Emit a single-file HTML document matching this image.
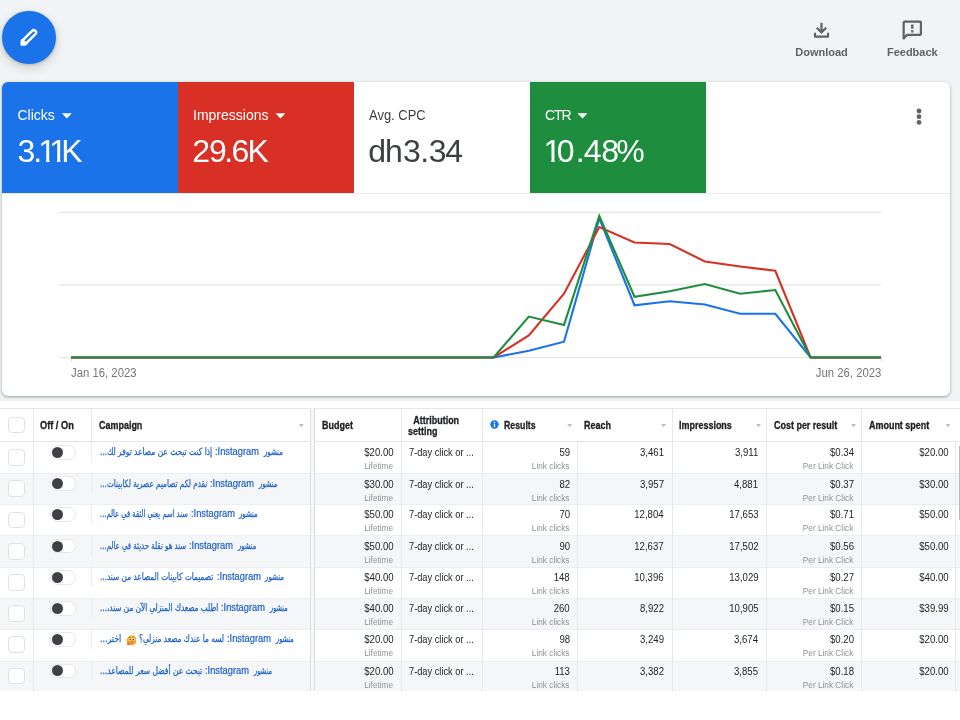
<!DOCTYPE html>
<html lang="en">
<head>
<meta charset="utf-8">
<title>Campaign performance</title>
<style>
*{box-sizing:border-box;margin:0;padding:0}
html,body{width:960px;height:720px;overflow:hidden;background:#fff}
body{font-family:"Liberation Sans","DejaVu Sans",sans-serif;color:#1c1e21}
#page{position:relative;width:960px;height:720px;overflow:hidden;background:#fff;will-change:transform}
#topbg{position:absolute;left:0;top:0;width:960px;height:401px;background:#f1f3f4}
#fab{position:absolute;left:2.4px;top:10.5px;width:53.5px;height:53.3px;border-radius:50%;background:#1a73e8;box-shadow:0 1px 3px rgba(60,64,67,.28),0 4px 8px 2px rgba(60,64,67,.13)}
#fab svg{position:absolute;left:0;top:0}
.act{position:absolute;top:0;text-align:center;color:#5f6368;font-size:11px;font-weight:bold;letter-spacing:0;white-space:nowrap}
.act svg{position:absolute}
.act span{position:absolute;left:0;right:0;top:45.1px;line-height:14px}
#card{position:absolute;left:2px;top:82.3px;width:948px;height:313.6px;background:#fff;border-radius:6px;box-shadow:0 1px 2px rgba(60,64,67,.3),0 1px 3px 1px rgba(60,64,67,.15);overflow:hidden}
.tile{position:absolute;top:0;height:111px;width:176px}
.tile .lb{position:absolute;left:15px;top:24px;font-size:14px;line-height:18px;white-space:nowrap}
.tile .lb i{display:inline-block;width:10px;height:5.3px;background:currentColor;clip-path:polygon(0 0,100% 0,50% 100%);margin-left:7px;vertical-align:1.7px}
.tile .vl{position:absolute;left:0;top:0;font-family:"Liberation Sans",sans-serif}
.t1{left:0;background:#1a73e8;color:#fff}
.t1 .lb{margin-left:.5px}
.t2{left:176px;background:#d93025;color:#fff}
.t3{left:352px;background:#fff;color:#3c4043}
.t4{left:528px;background:#1e8e3e;color:#fff;width:175.5px}
#tline{position:absolute;left:0;top:111px;width:100%;height:1px;background:#e8eaed}
#chart{position:absolute;left:0;top:0;width:960px;height:400px;pointer-events:none}
.dt{position:absolute;top:366.2px;font-size:12px;line-height:15px;color:#757575;white-space:nowrap;transform:scaleX(.945);transform-origin:0 50%}
#tbl{position:absolute;left:0;top:0;width:960px;height:690.8px;overflow:hidden;font-size:10.2px}
.hd{position:absolute;top:408.25px;height:33px;left:0;width:960px;font-weight:bold;font-size:10.2px;color:#1c1e21}
.hd .h{position:absolute;top:1px;line-height:33px;white-space:nowrap;transform:translateY(.45px) scaleX(.88);transform-origin:0 50%;-webkit-text-stroke:.3px currentColor}
.hd .h2{line-height:11.3px;top:6.5px;white-space:normal}
.car{position:absolute;top:15.4px;width:5.4px;height:3.7px;background:#b9c0cb;clip-path:polygon(0 0,100% 0,50% 100%);margin-left:.4px}
.cb{position:absolute;left:8.3px;width:16.4px;height:16.4px;border:1px solid #dfe1e5;border-radius:4px;background:#fff}
.row{position:absolute;left:0;width:960px;height:31.4px;background:#fff;box-shadow:inset 0 1px 0 #eceef1}
.row.alt{background:#f5f6f7}
.row .cb{top:8.2px}
.tg{position:absolute;left:50px;top:3.9px;width:25.8px;height:14.6px;border-radius:7.3px;background:#fff;border:1px solid #e6e7ea}
.tg i{position:absolute;left:1.2px;top:.8px;width:11px;height:11px;border-radius:50%;background:#3f4043}
.vd{position:absolute;left:91px;top:0;width:1px;height:21px;background:#e9ebee}
.nm{position:absolute;left:0;top:4.2px;width:310px;height:14px;color:#1a5fc8}
.nm span{position:absolute;top:0;line-height:14px;white-space:nowrap}
.ar{font-family:"DejaVu Sans",sans-serif;font-size:10px;-webkit-text-stroke:.25px currentColor;transform-origin:0 50%;direction:rtl;unicode-bidi:isolate}
.la{font-size:10px;-webkit-text-stroke:.2px currentColor;direction:rtl;unicode-bidi:isolate;transform:scaleX(.93);transform-origin:0 50%}
.emo{position:absolute;top:2.4px}
.v{position:absolute;margin-right:.3px;top:4.9px;line-height:14px;font-size:10px;text-align:right;white-space:nowrap;color:#1c1e21;transform:scaleX(.96);transform-origin:100% 50%}
.s{position:absolute;margin-right:.7px;top:18.8px;line-height:12px;font-size:8.9px;text-align:right;white-space:nowrap;color:#8e9196;transform:scaleX(.93);transform-origin:100% 50%}
.at{position:absolute;left:409.4px;top:4.9px;line-height:14px;font-size:10px;white-space:nowrap;transform:scaleX(.925);transform-origin:0 50%}
.c-bud{right:566.4px}
.c-res{right:389.6px}
.c-rea{right:295.9px}
.c-imp{right:201.4px}
.c-cpr{right:105.9px}
.c-amt{right:11.4px}
.vln{position:absolute;top:408.25px;width:1px;height:283.4px;background:#e6e8eb}
.hl{position:absolute;left:0;width:955.3px;height:1px;background:#e3e5e8}
#sb{position:absolute;left:958.6px;top:445.5px;width:1.4px;height:74px;background:#b9bbbe}
.rc{position:absolute;left:0;width:960px;height:31.4px}

</style>
</head>
<body>
<div id="page">
<div id="topbg"></div>
<div id="fab">
  <svg width="53.5" height="53.3" viewBox="0 0 53.5 53.3"><g transform="translate(26.5 26.8) rotate(45) scale(1.12)"><path d="M-2.05 5.4 V-6.6 a2.05 2.05 0 0 1 4.1 0 V5.4 Z" fill="none" stroke="#fff" stroke-width="2.2" stroke-linejoin="round"/><path d="M-3.15 5 H3.15 V6.4 L.35 9.4 H-.35 L-3.15 6.4 Z" fill="#fff" stroke="#fff" stroke-width=".5" stroke-linejoin="round"/></g></svg>
</div>
<div class="act" style="left:781.5px;width:80px">
  <svg style="left:31.5px;top:22.2px" width="17" height="17.2" preserveAspectRatio="none" viewBox="0 0 17 17" fill="none" stroke="#5f6368" stroke-width="2.2" stroke-linejoin="round"><path d="M8.5 .8 V10 M3.8 5.7 L8.5 10.3 L13.2 5.7" stroke-linejoin="miter"/><path d="M2 11.6 V14.5 H15 V11.6" stroke-linecap="round"/></svg>
  <span>Download</span>
</div>
<div class="act" style="left:872.3px;width:80px">
  <svg style="left:29.6px;top:20.4px" width="20.6" height="20.9" preserveAspectRatio="none" viewBox="0 0 20 20" fill="none" stroke="#5f6368" stroke-width="2.2" stroke-linejoin="round"><path d="M1.6 17.6 V2.6 a1 1 0 0 1 1 -1 H17.4 a1 1 0 0 1 1 1 V13.2 a1 1 0 0 1 -1 1 H5 Z"/><path d="M10 4.3 V8.4 M10 9.8 V12" stroke-width="2.3"/></svg>
  <span>Feedback</span>
</div>
<div id="card">
  <div class="tile t1"><div class="lb">Clicks<i></i></div><svg class="vl" width="176" height="111" viewBox="0 0 176 111"><text x="15.40 31.15 36.36 47.26 59.21" y="79.9" font-size="32" fill="#fff">3.11K</text><rect x="38.16" y="76.95" width="5.95" height="4" fill="#1a73e8"/><rect x="47.41" y="76.95" width="5.75" height="4" fill="#1a73e8"/><rect x="49.06" y="76.95" width="5.95" height="4" fill="#1a73e8"/><rect x="58.31" y="76.95" width="3.60" height="4" fill="#1a73e8"/></svg></div>
  <div class="tile t2"><div class="lb">Impressions<i></i></div><svg class="vl" width="176" height="111" viewBox="0 0 176 111"><text x="14.35 30.90 46.30 53.59 69.56" y="79.9" font-size="32" fill="#fff">29.6K</text></svg></div>
  <div class="tile t3"><div class="lb" style="transform:scaleX(.925);transform-origin:0 50%">Avg. CPC</div><svg class="vl" width="176" height="111" viewBox="0 0 176 111"><text x="14.36 31.09 49.10 66.25 74.70 91.30" y="79.9" font-size="32" fill="#3c4043">dh3.34</text></svg></div>
  <div class="tile t4"><div class="lb" style="letter-spacing:-1.1px">CTR<i></i></div><svg class="vl" width="176" height="111" viewBox="0 0 176 111"><text x="13.56 26.80 45.65 53.80 71.30 86.36" y="79.9" font-size="32" fill="#fff">10.48%</text><rect x="15.36" y="76.95" width="5.95" height="4" fill="#1e8e3e"/><rect x="24.61" y="76.95" width="5.10" height="4" fill="#1e8e3e"/></svg></div>
  <div id="tline"></div>
  <svg style="position:absolute;left:913.4px;top:24.8px" width="8" height="20" viewBox="0 0 8 20"><circle cx="4" cy="4" r="2.4" fill="#5f6368"/><circle cx="4" cy="9.7" r="2.4" fill="#5f6368"/><circle cx="4" cy="15.4" r="2.4" fill="#5f6368"/></svg>
</div>
<svg id="chart" viewBox="0 0 960 400" width="960" height="400">
  <g stroke="#e3e4e6" stroke-width="1.2">
    <line x1="59.5" y1="212.4" x2="881" y2="212.4"/>
    <line x1="59.5" y1="284.9" x2="881" y2="284.9"/>
    <line x1="59.5" y1="357.5" x2="881" y2="357.5"/>
    <line x1="71.5" y1="357" x2="71.5" y2="362"/>
    <line x1="881.5" y1="357" x2="881.5" y2="362"/>
  </g>
  <g fill="none" stroke-width="2.1" stroke-linejoin="miter">
    <polyline stroke="#1a73e8" points="71.0,357.50 106.2,357.50 141.4,357.50 176.7,357.50 211.9,357.50 247.1,357.50 282.3,357.50 317.5,357.50 352.7,357.50 388.0,357.50 423.2,357.50 458.4,357.50 493.6,357.50 528.8,350.75 564.0,341.75 599.3,218.30 634.5,305.25 669.7,301.25 704.9,304.50 740.1,313.75 775.3,313.75 810.6,357.50 845.8,357.50 881.0,357.50"/>
    <polyline stroke="#d93025" points="71.0,357.50 106.2,357.50 141.4,357.50 176.7,357.50 211.9,357.50 247.1,357.50 282.3,357.50 317.5,357.50 352.7,357.50 388.0,357.50 423.2,357.50 458.4,357.50 493.6,357.50 528.8,335.50 564.0,293.75 599.3,227.00 634.5,242.50 669.7,244.00 704.9,261.50 740.1,266.50 775.3,270.75 810.6,357.50 845.8,357.50 881.0,357.50"/>
    <polyline stroke="#1e8e3e" points="71.0,357.50 106.2,357.50 141.4,357.50 176.7,357.50 211.9,357.50 247.1,357.50 282.3,357.50 317.5,357.50 352.7,357.50 388.0,357.50 423.2,357.50 458.4,357.50 493.6,357.50 528.8,316.60 564.0,324.90 599.3,215.90 634.5,296.75 669.7,291.25 704.9,284.00 740.1,293.75 775.3,290.00 810.6,357.50 845.8,357.50 881.0,357.50"/>
  </g>
</svg>
<div class="dt" style="left:71px">Jan 16, 2023</div>
<div class="dt" style="right:79px;transform-origin:100% 50%">Jun 26, 2023</div>
<div id="tbl">
<div class="hd">
  <span class="cb" style="top:8.8px"></span>
  <span class="h" style="left:40px;transform:translateY(.45px) scaleX(.905)">Off / On</span>
  <span class="h" style="left:99px">Campaign</span><i class="car" style="left:298.2px"></i>
  <span class="h" style="left:321.75px">Budget</span>
  <span class="h h2" style="left:408.25px;width:90px;text-indent:6px">Attribution<br>setting</span>
  <svg style="position:absolute;left:490px;top:12px" width="9" height="9" viewBox="0 0 9 9"><circle cx="4.5" cy="4.5" r="4.2" fill="#1877f2"/><rect x="3.9" y="3.8" width="1.2" height="3.2" fill="#fff"/><circle cx="4.5" cy="2.5" r=".75" fill="#fff"/></svg>
  <span class="h" style="left:503.75px;transform:translateY(.45px) scaleX(.86)">Results</span><i class="car" style="left:566.6px"></i>
  <span class="h" style="left:584.25px">Reach</span><i class="car" style="left:660.4px"></i>
  <span class="h" style="left:679.25px">Impressions</span><i class="car" style="left:755.4px"></i>
  <span class="h" style="left:774px">Cost per result</span><i class="car" style="left:850.4px"></i>
  <span class="h" style="left:869px">Amount spent</span><i class="car" style="left:944.9px"></i>
</div>
<div class="row" style="top:441.25px"><div class="rc" style="top:0.00px">
  <span class="cb"></span>
  <span class="tg"><i></i></span>
  <span class="vd"></span></div><div class="rc" style="top:0.00px">
  <a class="nm"><span class="ar" dir="rtl" style="left:263.8px;transform:scaleX(0.692)">منشور</span> <span class="la" dir="rtl" style="left:215.0px">Instagram:</span> <span class="ar" dir="rtl" style="left:100.3px;transform:scaleX(0.748)">إذا كنت تبحث عن مصاعد توفر لك...</span></a>
  <span class="v c-bud">$20.00</span><span class="s c-bud">Lifetime</span>
  <span class="at">7-day click or ...</span>
  <span class="v c-res">59</span><span class="s c-res">Link clicks</span>
  <span class="v c-rea">3,461</span>
  <span class="v c-imp">3,911</span>
  <span class="v c-cpr">$0.34</span><span class="s c-cpr">Per Link Click</span>
  <span class="v c-amt">$20.00</span>
</div></div>
<div class="row alt" style="top:472.60px"><div class="rc" style="top:-0.30px">
  <span class="cb"></span>
  <span class="tg"><i></i></span>
  <span class="vd"></span></div><div class="rc" style="top:0.60px">
  <a class="nm"><span class="ar" dir="rtl" style="left:258.8px;transform:scaleX(0.678)">منشور</span> <span class="la" dir="rtl" style="left:210.4px">Instagram:</span> <span class="ar" dir="rtl" style="left:100.3px;transform:scaleX(0.727)">نقدم لكم تصاميم عصرية لكابينات...</span></a>
  <span class="v c-bud">$30.00</span><span class="s c-bud">Lifetime</span>
  <span class="at">7-day click or ...</span>
  <span class="v c-res">82</span><span class="s c-res">Link clicks</span>
  <span class="v c-rea">3,957</span>
  <span class="v c-imp">4,881</span>
  <span class="v c-cpr">$0.37</span><span class="s c-cpr">Per Link Click</span>
  <span class="v c-amt">$30.00</span>
</div></div>
<div class="row" style="top:503.95px"><div class="rc" style="top:-0.50px">
  <span class="cb"></span>
  <span class="tg"><i></i></span>
  <span class="vd"></span></div><div class="rc" style="top:-0.80px">
  <a class="nm"><span class="ar" dir="rtl" style="left:239.4px;transform:scaleX(0.689)">منشور</span> <span class="la" dir="rtl" style="left:190.9px">Instagram:</span> <span class="ar" dir="rtl" style="left:100.3px;transform:scaleX(0.676)">سند اسم يعني الثقة في عالم...</span></a>
  <span class="v c-bud">$50.00</span><span class="s c-bud">Lifetime</span>
  <span class="at">7-day click or ...</span>
  <span class="v c-res">70</span><span class="s c-res">Link clicks</span>
  <span class="v c-rea">12,804</span>
  <span class="v c-imp">17,653</span>
  <span class="v c-cpr">$0.71</span><span class="s c-cpr">Per Link Click</span>
  <span class="v c-amt">$50.00</span>
</div></div>
<div class="row alt" style="top:535.30px"><div class="rc" style="top:-0.30px">
  <span class="cb"></span>
  <span class="tg"><i></i></span>
  <span class="vd"></span></div><div class="rc" style="top:-0.20px">
  <a class="nm"><span class="ar" dir="rtl" style="left:237.7px;transform:scaleX(0.667)">منشور</span> <span class="la" dir="rtl" style="left:189.3px">Instagram:</span> <span class="ar" dir="rtl" style="left:100.3px;transform:scaleX(0.698)">سند هو نقلة حديثة في عالم...</span></a>
  <span class="v c-bud">$50.00</span><span class="s c-bud">Lifetime</span>
  <span class="at">7-day click or ...</span>
  <span class="v c-res">90</span><span class="s c-res">Link clicks</span>
  <span class="v c-rea">12,637</span>
  <span class="v c-imp">17,502</span>
  <span class="v c-cpr">$0.56</span><span class="s c-cpr">Per Link Click</span>
  <span class="v c-amt">$50.00</span>
</div></div>
<div class="row" style="top:566.65px"><div class="rc" style="top:-0.60px">
  <span class="cb"></span>
  <span class="tg"><i></i></span>
  <span class="vd"></span></div><div class="rc" style="top:-0.60px">
  <a class="nm"><span class="ar" dir="rtl" style="left:265.0px;transform:scaleX(0.700)">منشور</span> <span class="la" dir="rtl" style="left:216.6px">Instagram:</span> <span class="ar" dir="rtl" style="left:100.3px;transform:scaleX(0.735)">تصميمات كابينات المصاعد من سند...</span></a>
  <span class="v c-bud">$40.00</span><span class="s c-bud">Lifetime</span>
  <span class="at">7-day click or ...</span>
  <span class="v c-res">148</span><span class="s c-res">Link clicks</span>
  <span class="v c-rea">10,396</span>
  <span class="v c-imp">13,029</span>
  <span class="v c-cpr">$0.27</span><span class="s c-cpr">Per Link Click</span>
  <span class="v c-amt">$40.00</span>
</div></div>
<div class="row alt" style="top:598.00px"><div class="rc" style="top:-0.90px">
  <span class="cb"></span>
  <span class="tg"><i></i></span>
  <span class="vd"></span></div><div class="rc" style="top:-1.00px">
  <a class="nm"><span class="ar" dir="rtl" style="left:269.8px;transform:scaleX(0.648)">منشور</span> <span class="la" dir="rtl" style="left:221.4px">Instagram:</span> <span class="ar" dir="rtl" style="left:100.3px;transform:scaleX(0.731)">اطلب مصعدك المنزلي الآن من سند،...</span></a>
  <span class="v c-bud">$40.00</span><span class="s c-bud">Lifetime</span>
  <span class="at">7-day click or ...</span>
  <span class="v c-res">260</span><span class="s c-res">Link clicks</span>
  <span class="v c-rea">8,922</span>
  <span class="v c-imp">10,905</span>
  <span class="v c-cpr">$0.15</span><span class="s c-cpr">Per Link Click</span>
  <span class="v c-amt">$39.99</span>
</div></div>
<div class="row" style="top:629.35px"><div class="rc" style="top:-1.20px">
  <span class="cb"></span>
  <span class="tg"><i></i></span>
  <span class="vd"></span></div><div class="rc" style="top:-1.40px">
  <a class="nm"><span class="ar" dir="rtl" style="left:275.6px;transform:scaleX(0.648)">منشور</span> <span class="la" dir="rtl" style="left:227.1px">Instagram:</span> <span class="ar" dir="rtl" style="left:139.3px;transform:scaleX(0.735)">لسه ما عندك مصعد منزلي؟</span> <svg class="emo" style="left:125.5px" viewBox="0 0 12 12" width="10.8" height="10.8" role="img" aria-label="thinking face"><title>🤔</title><defs><linearGradient id="eg" x1="0" y1="0" x2="0" y2="1"><stop offset="0" stop-color="#fdc633"/><stop offset="1" stop-color="#f6952a"/></linearGradient></defs><circle cx="6.2" cy="5.8" r="5.6" fill="url(#eg)"/><ellipse cx="4.3" cy="4.9" rx="1.25" ry="1.5" fill="#fff"/><ellipse cx="8" cy="4.7" rx="1.25" ry="1.5" fill="#fff"/><circle cx="4.5" cy="5.1" r=".8" fill="#3a2416"/><circle cx="8.1" cy="4.9" r=".8" fill="#3a2416"/><path d="M3 2.9 Q4.3 2.1 5.5 2.9 M7 2.3 Q8.3 1.7 9.4 2.6" stroke="#5a3a18" stroke-width=".7" fill="none"/><path d="M5.4 7.9 Q6.4 7.5 7.4 8" stroke="#5a3a18" stroke-width=".8" fill="none"/><path d="M1 9.6 Q1.4 7.9 3.4 8.3 Q5 8.8 4.6 10.3 Q4 11.8 2.4 11.5 Q.8 11.1 1 9.6 Z" fill="#f4701f"/></svg> <span class="ar" dir="rtl" style="left:100.3px;transform:scaleX(0.788)">اختر...</span></a>
  <span class="v c-bud">$20.00</span><span class="s c-bud">Lifetime</span>
  <span class="at">7-day click or ...</span>
  <span class="v c-res">98</span><span class="s c-res">Link clicks</span>
  <span class="v c-rea">3,249</span>
  <span class="v c-imp">3,674</span>
  <span class="v c-cpr">$0.20</span><span class="s c-cpr">Per Link Click</span>
  <span class="v c-amt">$20.00</span>
</div></div>
<div class="row alt" style="top:660.70px"><div class="rc" style="top:-0.90px">
  <span class="cb"></span>
  <span class="tg"><i></i></span>
  <span class="vd"></span></div><div class="rc" style="top:-0.80px">
  <a class="nm"><span class="ar" dir="rtl" style="left:253.6px;transform:scaleX(0.656)">منشور</span> <span class="la" dir="rtl" style="left:205.4px">Instagram:</span> <span class="ar" dir="rtl" style="left:100.3px;transform:scaleX(0.754)">تبحث عن أفضل سعر للمصاعد...</span></a>
  <span class="v c-bud">$20.00</span><span class="s c-bud">Lifetime</span>
  <span class="at">7-day click or ...</span>
  <span class="v c-res">113</span><span class="s c-res">Link clicks</span>
  <span class="v c-rea">3,382</span>
  <span class="v c-imp">3,855</span>
  <span class="v c-cpr">$0.18</span><span class="s c-cpr">Per Link Click</span>
  <span class="v c-amt">$20.00</span>
</div></div>
<div class="hl" style="top:408.25px;width:960px"></div>
<div class="hl" style="top:441.25px"></div>
<div class="vln" style="left:32.5px"></div>
<div class="vln" style="left:91px;height:33px"></div>
<div class="vln" style="left:310px;background:#dcdee1"></div>
<div class="vln" style="left:311px;width:3px;background:#f6f7f8"></div>
<div class="vln" style="left:313.8px;background:#dcdee1"></div>
<div class="vln" style="left:401px"></div>
<div class="vln" style="left:482.2px"></div>
<div class="vln" style="left:577px;top:441.25px;height:250.4px"></div>
<div class="vln" style="left:672px"></div>
<div class="vln" style="left:766.2px"></div>
<div class="vln" style="left:861px"></div>
<div class="vln" style="left:955.3px;top:441.25px;height:250.4px;background:#e6e8eb"></div>
<div id="sb"></div>
</div>
</div>
</body>
</html>
